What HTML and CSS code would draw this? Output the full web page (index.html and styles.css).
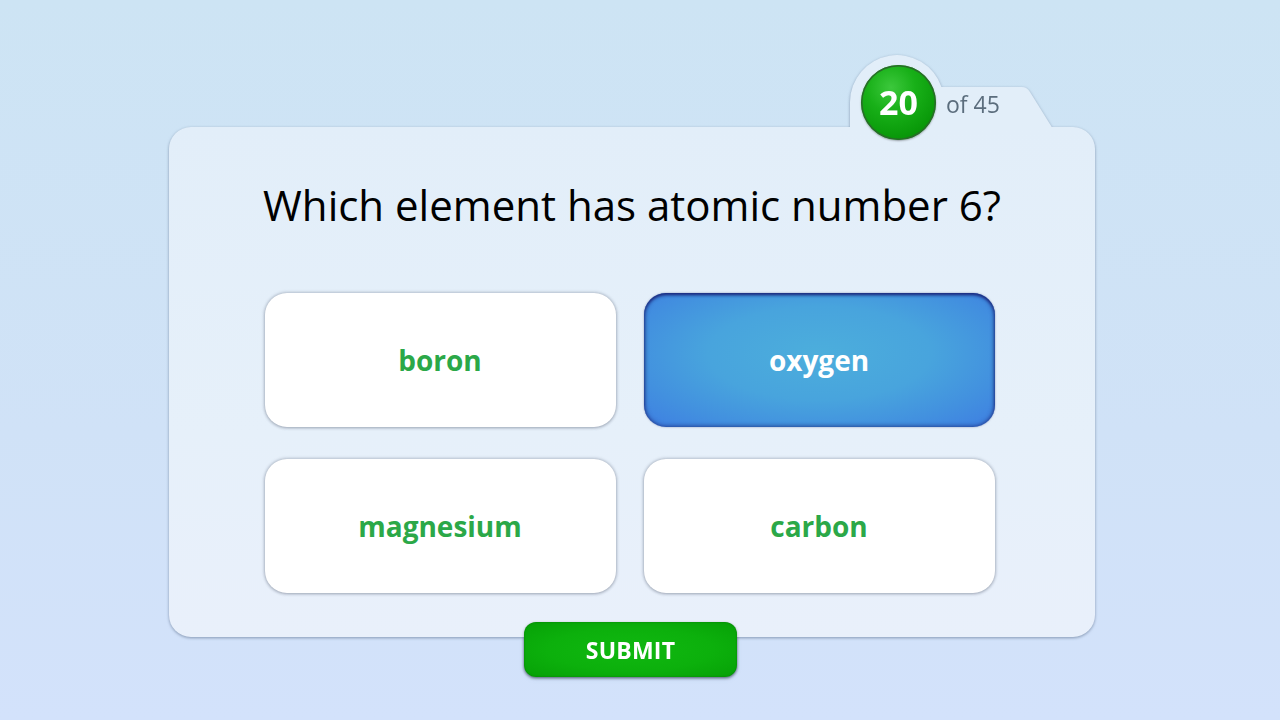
FILE: index.html
```html
<!DOCTYPE html>
<html>
<head>
<meta charset="utf-8">
<link rel="stylesheet" href="styles.css">
</head>
<body>
<main class="stage">
  <section class="quiz">
    <svg class="tab" width="210" height="76" viewBox="0 0 210 76">
      <path d="M0,76 L0,47 A47,47 0 0 1 91.5,32 L172,32 Q177,32 180,37 L203,74 L203,76 Z" fill="#e2eef9"/>
    </svg>
    <div class="badge"><span>20</span></div>
    <div class="count">of 45</div>
    <div class="card">
      <h1 class="question">Which element has atomic number 6?</h1>
      <div class="answers">
        <button class="answer">boron</button>
        <button class="answer selected">oxygen</button>
        <button class="answer">magnesium</button>
        <button class="answer">carbon</button>
      </div>
    </div>
    <button class="submit">SUBMIT</button>
  </section>
</main>
</body>
</html>
```

FILE: styles.css
```css
html, body {
  margin: 0;
  height: 100%;
}
body {
  background: linear-gradient(180deg, #cde4f4 0%, #d0e2f7 60%, #d3e2fb 100%);
  font-family: "Open Sans", "Liberation Sans", sans-serif;
  overflow: hidden;
}
.stage {
  display: flex;
  justify-content: flex-start;
  padding-top: 127px;
  padding-left: 169px;
}
.quiz {
  position: relative;
  width: 926px;
  display: flex;
  flex-direction: column;
  align-items: center;
  filter: drop-shadow(0 1px 1.5px rgba(70, 90, 120, 0.55));
}
.tab {
  position: absolute;
  left: 681px;
  top: -72px;
  z-index: 1;
}
.badge {
  position: absolute;
  left: 692px;
  top: -62px;
  width: 75px;
  height: 75px;
  border-radius: 50%;
  z-index: 3;
  background: radial-gradient(circle at 40% 30%, #3cc83c 0%, #18b018 35%, #0a9a0a 70%, #087e08 100%);
  box-shadow: inset 0 0 0 1.5px #2a6a2a, 0 1px 2px rgba(0,0,0,0.35);
  display: flex;
  align-items: center;
  justify-content: center;
}
.badge span {
  color: #fff;
  font-weight: 700;
  font-size: 34px;
  line-height: 1;
  margin-top: -2px;
}
.count {
  position: absolute;
  left: 777px;
  top: -34px;
  z-index: 3;
  font-size: 23px;
  color: #5b6d7d;
  line-height: 1;
}
.card {
  position: relative;
  z-index: 2;
  width: 926px;
  height: 510px;
  box-sizing: border-box;
  border-radius: 22px;
  background: linear-gradient(180deg, #e2eef9 0%, #e6f0fa 60%, #e9f0fb 100%);
  display: flex;
  flex-direction: column;
  align-items: center;
  padding-top: 53px;
}
.question {
  margin: 0;
  font-weight: 400;
  font-size: 42px;
  line-height: 50px;
  color: #000;
}
.answers {
  margin-top: 63px;
  margin-left: -5px;
  display: grid;
  grid-template-columns: 351px 351px;
  grid-auto-rows: 134px;
  column-gap: 28px;
  row-gap: 32px;
}
.answer {
  border: none;
  border-radius: 22px;
  background: #fff;
  box-shadow: 0 0 3px 1px rgba(90, 100, 120, 0.3), 0 1px 3px rgba(90, 100, 120, 0.3);
  font-family: inherit;
  font-weight: 700;
  font-size: 28px;
  color: #2ba848;
  padding: 0;
}
.answer.selected {
  color: #fff;
  background: radial-gradient(ellipse at 50% 45%, #4caedc 0%, #48a4dd 45%, #4290df 75%, #3e7ee2 100%);
  box-shadow: inset 0 2px 3px rgba(25, 35, 120, 0.85), inset 0 0 4px 1px rgba(25, 40, 120, 0.7), 0 0 2px rgba(40, 60, 120, 0.5);
}
.submit {
  position: relative;
  z-index: 4;
  margin-top: -15px;
  margin-left: -3px;
  width: 213px;
  height: 55px;
  border: none;
  border-radius: 12px;
  background: radial-gradient(ellipse at 50% 50%, #10b810 0%, #0cb00c 55%, #06a006 100%);
  box-shadow: inset 0 0 2px rgba(0, 60, 0, 0.4), 0 1px 3px rgba(0, 0, 0, 0.35);
  color: #fff;
  font-family: inherit;
  font-weight: 700;
  font-size: 23px;
  letter-spacing: 0.2px;
  padding: 0;
}
```
